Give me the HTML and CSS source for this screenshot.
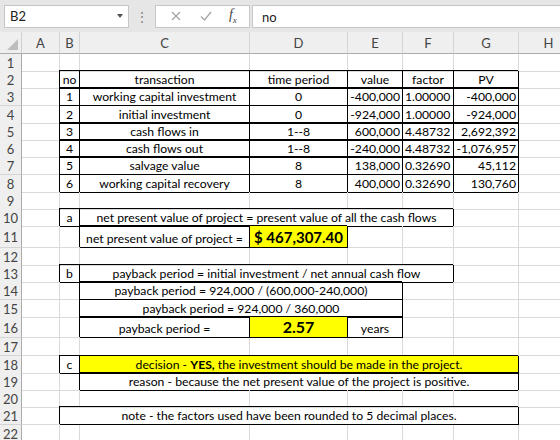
FILE: index.html
```html
<!DOCTYPE html>
<html lang="en">
<head>
    <meta charset="UTF-8">
    <title>NPV worksheet</title>
    <link rel="stylesheet" href="styles.css">
</head>
<body>
    <div class="formula-bar">
        <div class="name-box">
            <span>B2</span>
            <span class="caret"></span>
        </div>
        <div class="grip">&#8942;</div>
        <div class="fx-box">
            <svg width="12" height="12" viewBox="0 0 12 12"><path d="M2 2 L10 10 M10 2 L2 10" stroke="#a6a6a6" stroke-width="1.3" fill="none"/></svg>
            <svg width="14" height="12" viewBox="0 0 14 12"><path d="M2 6.5 L5.5 10 L12 2" stroke="#a6a6a6" stroke-width="1.3" fill="none"/></svg>
            <span class="fx">f<sub>x</sub></span>
        </div>
        <div class="formula-input">no</div>
    </div>

    <div class="sheet">
        <div class="row head">
            <div class="corner"><span class="tri"></span></div>
            <div class="ch">A</div><div class="ch">B</div><div class="ch">C</div><div class="ch">D</div>
            <div class="ch">E</div><div class="ch">F</div><div class="ch">G</div><div class="ch">H</div>
        </div>

        <div class="row">
            <div class="rh">1</div>
            <div class="c"></div><div class="c"></div><div class="c"></div><div class="c"></div>
            <div class="c"></div><div class="c"></div><div class="c"></div><div class="c"></div>
        </div>

        <div class="row">
            <div class="rh">2</div>
            <div class="c"></div>
            <div class="c b mid">no</div>
            <div class="c b mid">transaction</div>
            <div class="c b mid">time period</div>
            <div class="c b mid">value</div>
            <div class="c b mid">factor</div>
            <div class="c b mid">PV</div>
            <div class="c"></div>
        </div>
        <div class="row">
            <div class="rh">3</div>
            <div class="c"></div>
            <div class="c b mid">1</div>
            <div class="c b mid">working capital investment</div>
            <div class="c b mid">0</div>
            <div class="c b num">-400,000</div>
            <div class="c b txt">1.00000</div>
            <div class="c b num">-400,000</div>
            <div class="c"></div>
        </div>
        <div class="row">
            <div class="rh">4</div>
            <div class="c"></div>
            <div class="c b mid">2</div>
            <div class="c b mid">initial investment</div>
            <div class="c b mid">0</div>
            <div class="c b num">-924,000</div>
            <div class="c b txt">1.00000</div>
            <div class="c b num">-924,000</div>
            <div class="c"></div>
        </div>
        <div class="row">
            <div class="rh">5</div>
            <div class="c"></div>
            <div class="c b mid">3</div>
            <div class="c b mid">cash flows in</div>
            <div class="c b mid">1--8</div>
            <div class="c b num">600,000</div>
            <div class="c b txt">4.48732</div>
            <div class="c b num">2,692,392</div>
            <div class="c"></div>
        </div>
        <div class="row">
            <div class="rh">6</div>
            <div class="c"></div>
            <div class="c b mid">4</div>
            <div class="c b mid">cash flows out</div>
            <div class="c b mid">1--8</div>
            <div class="c b num">-240,000</div>
            <div class="c b txt">4.48732</div>
            <div class="c b num">-1,076,957</div>
            <div class="c"></div>
        </div>
        <div class="row">
            <div class="rh">7</div>
            <div class="c"></div>
            <div class="c b mid">5</div>
            <div class="c b mid">salvage value</div>
            <div class="c b mid">8</div>
            <div class="c b num">138,000</div>
            <div class="c b txt">0.32690</div>
            <div class="c b num">45,112</div>
            <div class="c"></div>
        </div>
        <div class="row">
            <div class="rh">8</div>
            <div class="c"></div>
            <div class="c b mid">6</div>
            <div class="c b mid">working capital recovery</div>
            <div class="c b mid">8</div>
            <div class="c b num">400,000</div>
            <div class="c b txt">0.32690</div>
            <div class="c b num">130,760</div>
            <div class="c"></div>
        </div>

        <div class="row">
            <div class="rh">9</div>
            <div class="c"></div><div class="c"></div><div class="c"></div><div class="c"></div>
            <div class="c"></div><div class="c"></div><div class="c"></div><div class="c"></div>
        </div>

        <div class="row">
            <div class="rh">10</div>
            <div class="c"></div>
            <div class="c b mid">a</div>
            <div class="c b mid span4">net present value of project = present value of all the cash flows</div>
            <div class="c"></div>
            <div class="c"></div>
        </div>
        <div class="row tall">
            <div class="rh">11</div>
            <div class="c"></div>
            <div class="c"></div>
            <div class="c b mid">net present value of project =</div>
            <div class="c b hi money"><span>$</span><span>467,307.40</span></div>
            <div class="c"></div><div class="c"></div><div class="c"></div><div class="c"></div>
        </div>

        <div class="row">
            <div class="rh">12</div>
            <div class="c"></div><div class="c"></div><div class="c"></div><div class="c"></div>
            <div class="c"></div><div class="c"></div><div class="c"></div><div class="c"></div>
        </div>

        <div class="row">
            <div class="rh">13</div>
            <div class="c"></div>
            <div class="c b mid">b</div>
            <div class="c b mid span4">payback period = initial investment / net annual cash flow</div>
            <div class="c"></div>
            <div class="c"></div>
        </div>
        <div class="row">
            <div class="rh">14</div>
            <div class="c"></div>
            <div class="c"></div>
            <div class="c b mid span3">payback period = 924,000 / (600,000-240,000)</div>
            <div class="c"></div><div class="c"></div><div class="c"></div>
        </div>
        <div class="row">
            <div class="rh">15</div>
            <div class="c"></div>
            <div class="c"></div>
            <div class="c b mid span3">payback period = 924,000 / 360,000</div>
            <div class="c"></div><div class="c"></div><div class="c"></div>
        </div>
        <div class="row tall">
            <div class="rh">16</div>
            <div class="c"></div>
            <div class="c"></div>
            <div class="c b mid">payback period =</div>
            <div class="c b mid hi big">2.57</div>
            <div class="c b mid">years</div>
            <div class="c"></div><div class="c"></div><div class="c"></div>
        </div>

        <div class="row">
            <div class="rh">17</div>
            <div class="c"></div><div class="c"></div><div class="c"></div><div class="c"></div>
            <div class="c"></div><div class="c"></div><div class="c"></div><div class="c"></div>
        </div>

        <div class="row">
            <div class="rh">18</div>
            <div class="c"></div>
            <div class="c b mid">c</div>
            <div class="c b mid span5 yellow">decision -&nbsp;<b>YES,</b>&nbsp;the investment should be made in the project.</div>
            <div class="c"></div>
        </div>
        <div class="row">
            <div class="rh">19</div>
            <div class="c"></div>
            <div class="c"></div>
            <div class="c b mid span5">reason - because the net present value of the project is positive.</div>
            <div class="c"></div>
        </div>

        <div class="row">
            <div class="rh">20</div>
            <div class="c"></div><div class="c"></div><div class="c"></div><div class="c"></div>
            <div class="c"></div><div class="c"></div><div class="c"></div><div class="c"></div>
        </div>

        <div class="row">
            <div class="rh">21</div>
            <div class="c"></div>
            <div class="c b mid span6">note - the factors used have been rounded to 5 decimal places.</div>
            <div class="c"></div>
        </div>

        <div class="row">
            <div class="rh">22</div>
            <div class="c"></div><div class="c"></div><div class="c"></div><div class="c"></div>
            <div class="c"></div><div class="c"></div><div class="c"></div><div class="c"></div>
        </div>
    </div>
</body>
</html>
```

FILE: styles.css
```css
:root {
    --cols: 22px 38px 20px 170px 98px 55px 51px 65px 60px;
    --grid: #dadada;
    --head: #efefef;
    --ink: #000000;
}

html, body {
    margin: 0;
    height: 100%;
    overflow: hidden;
}

body {
    background: #ffffff;
    font-family: Lato, "Liberation Sans", sans-serif;
    font-size: 12.2px;
    color: var(--ink);
}

/* formula bar */
.formula-bar {
    display: flex;
    align-items: center;
    height: 32px;
    background: #e6e6e6;
    box-sizing: border-box;
    padding: 0 0 0 4px;
    font-size: 13px;
}

.name-box {
    display: flex;
    align-items: center;
    justify-content: space-between;
    width: 125px;
    height: 23px;
    box-sizing: border-box;
    background: #fff;
    border: 1px solid #c6c6c6;
    padding: 0 5px 0 5px;
    color: #222;
}

.caret {
    width: 0;
    height: 0;
    border-left: 3.5px solid transparent;
    border-right: 3.5px solid transparent;
    border-top: 4px solid #555;
}

.grip {
    width: 26px;
    text-align: center;
    color: #8a8a8a;
    font-size: 14px;
}

.fx-box {
    display: flex;
    align-items: center;
    justify-content: space-around;
    width: 95px;
    height: 23px;
    box-sizing: border-box;
    background: #fff;
    border: 1px solid #c6c6c6;
    padding: 0 4px 0 6px;
}

.fx {
    font-family: "Liberation Serif", serif;
    font-style: italic;
    font-size: 14px;
    color: #444;
    line-height: 1;
}

.fx sub {
    font-size: 9px;
}

.formula-input {
    flex: 1;
    height: 23px;
    margin-left: 2px;
    box-sizing: border-box;
    background: #fff;
    border: 1px solid #c6c6c6;
    border-right: none;
    padding: 3px 0 0 9px;
    color: #222;
}

/* sheet */
.row {
    display: grid;
    grid-template-columns: var(--cols);
    height: 17.25px;
}

.row.tall {
    height: 21.5px;
}

.row.head {
    height: 21.75px;
    background: var(--head);
    font-size: 13px;
}

.corner {
    position: relative;
    border-right: 1px solid #cfcfcf;
    border-bottom: 1px solid #ababab;
}

.tri {
    position: absolute;
    right: 3px;
    bottom: 3px;
    width: 0;
    height: 0;
    border-left: 11px solid transparent;
    border-bottom: 11px solid #bdbdbd;
}

.ch {
    display: flex;
    align-items: center;
    justify-content: center;
    color: #444;
    border-right: 1px solid #d4d4d4;
    border-bottom: 1px solid #ababab;
    padding-top: 2px;
}

.rh {
    display: flex;
    align-items: center;
    justify-content: center;
    background: var(--head);
    color: #444;
    font-size: 13px;
    border-right: 1px solid #ababab;
    border-bottom: 1px solid #d4d4d4;
    padding-top: 1px;
    box-sizing: border-box;
}

.c {
    display: flex;
    align-items: flex-end;
    border-right: 1px solid var(--grid);
    border-bottom: 1px solid var(--grid);
    padding: 0 2px 1px 2px;
    white-space: nowrap;
    overflow: visible;
    min-width: 0;
    box-sizing: border-box;
}

.c.b {
    border-right-color: #000;
    border-bottom-color: #000;
    box-shadow: -1px -1px 0 #000;
}

.mid { justify-content: center; }
.num { justify-content: flex-end; }
.txt { justify-content: flex-start; }

.span3 { grid-column: span 3; }
.span4 { grid-column: span 4; }
.span5 { grid-column: span 5; }
.span6 { grid-column: span 6; }

.hi,
.yellow {
    background: #ffff00;
}

.money {
    justify-content: space-between;
    font-weight: bold;
    font-size: 15px;
    padding: 0 4px 1px 4px;
}

.big {
    font-weight: bold;
    font-size: 16px;
}

.yellow b {
    font-weight: bold;
}
```
